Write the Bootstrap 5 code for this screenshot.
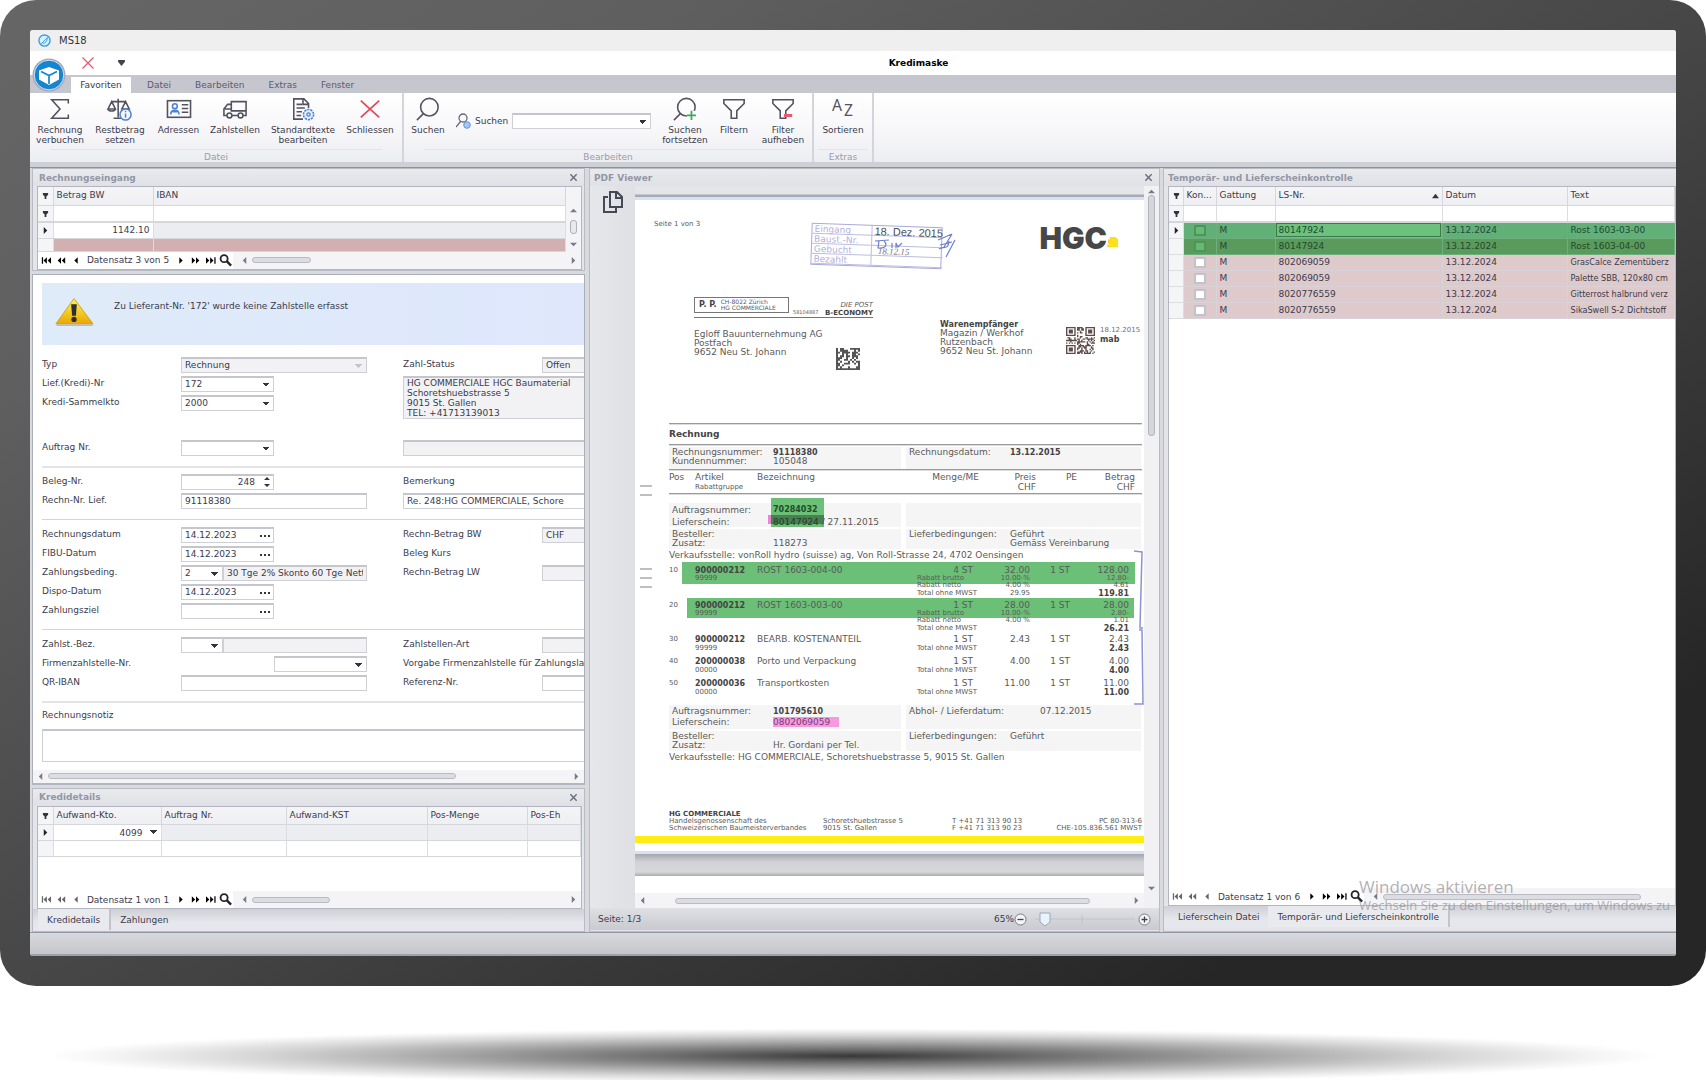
<!DOCTYPE html>
<html lang="de">
<head>
<meta charset="utf-8">
<meta name="viewport" content="width=device-width, initial-scale=1">
<title>MS18 – Kredimaske</title>
<link href="https://cdn.jsdelivr.net/npm/bootstrap@5.3.0/dist/css/bootstrap.min.css" rel="stylesheet">
<style>
:root{--ink:#3b3b4d;--line:#c9cad1;--soft:#f4f4f6;--face:#e4e5e9}
body{background:#fff;font-family:"DejaVu Sans",Tahoma,sans-serif;font-size:9px;line-height:12px;color:var(--ink);overflow-x:hidden}
button,input,select,textarea{font:inherit;color:inherit;border-radius:0}
button{background:none;border:0;padding:0}
.narrow{font-family:"DejaVu Sans Condensed","DejaVu Sans",sans-serif}
.monitor{background:linear-gradient(to bottom right,#666 0%,#5f5f5f 20%,#434343 55%,#262626 85%,#262626 100%);border-radius:36px;padding:30px}
.screen{border-radius:3px;overflow:hidden;background:#d5d6db;position:relative}
.floor{height:60px;margin:40px 30px 0;background:radial-gradient(ellipse 49% 46% at 50% 50%,#383838 0%,#6c6c6c 22%,#a2a2a2 48%,#d6d6d6 74%,#f4f4f4 92%,#fff 100%)}
.titlebar{height:21px;background:#efefef;padding:0 8px;font-size:10px;color:#333}
.quickbar{height:24px;background:#fff}
.quickbar .caption{font-weight:700;font-size:9px;color:#000;padding-left:36px}
.appbtn{position:absolute;left:1px;top:28px;width:36px;height:36px}
.tabstrip{height:18px;background:#c6c6ce;padding-left:41px}
.tabstrip a{height:16px;margin-top:2px;line-height:16px;color:#5b5b6b;text-decoration:none;padding:0 8px}
.tabstrip a.on{background:#fff;color:var(--ink);width:60px;padding:0;text-align:center}
.ribbon{height:69px;background:linear-gradient(#fff,#f6f6f9 60%,#ecedf1)}
.rgroup{border-right:2px solid #d4d5db;height:69px}
.rgroup .acts{height:56px;padding-top:4px}
.rgroup .gname{height:13px;line-height:14px;text-align:center;color:#9a9ca8;border-top:1px solid #e3e4e9;margin:0 20px}
.rbtn{width:60px;line-height:10px;text-align:center;display:flex;flex-direction:column;align-items:center;white-space:nowrap}
.rbtn svg{width:28px;height:24px;margin-bottom:4px}
.rband{height:6px;background:#cfd0d5;border-bottom:1px solid #8c93a0}
.work{height:765px;background:#d9dade;padding:0 0 0 2px;border-bottom:1px solid #8f98a5}
.leftcol{width:553px;gap:3px}
.midcol{width:571px;margin-left:4px}
.rightcol{margin-left:3px;min-width:0}
.pane{background:var(--face);border:1px solid #b9bbc4}
.pane-h{height:17px;padding:0 6px;font-weight:700;color:#9296a5;background:linear-gradient(#e9eaed,#e0e1e6)}
.pane-h svg{width:9px;height:9px}
.gridbox{background:#fff;border:1px solid #b3b6c0;margin:0 2px 0 4px}
table.dgrid{border-collapse:collapse;table-layout:fixed;width:100%;margin:0}
.dgrid th{font-weight:400;background:linear-gradient(#f4f4f6,#eeeff2);border-right:1px solid #d6d7dd;border-bottom:1px solid #d6d7dd;height:18px;padding:0 3px;white-space:nowrap;overflow:hidden;line-height:13px}
.dgrid td{border-right:1px solid #dcdde2;border-bottom:1px solid #d6d7dd;padding:0 3px;height:16px;line-height:14px;white-space:nowrap;overflow:hidden}
.dgrid .frow td{height:17px;border-bottom:2px solid #d6d7dd}
.dgrid .sel{background:#f4f5f7;padding:0 0 0 4px}
.dgrid svg{width:7px;height:7px;display:block}
.nav-strip{height:17px;background:#fff}
.nav-strip button{width:15px;height:15px;line-height:0}
.nav-strip button svg{width:10px;height:7px}
.nav-strip .mag svg{width:13px;height:13px}
.nav-strip .rec{white-space:nowrap;width:90px;text-align:center}
.track{background:#f4f4f7;height:17px}
.thumb{height:6px;border:1px solid #b9bac3;border-radius:3px;background:#dcdde3}
.arr{width:7px;height:7px;flex:none}
.formpane{background:#fff;border:1px solid #a9aeb9;border-bottom:2px solid #b3b6c0;height:511px;overflow:hidden}
.infobox{height:62px;margin:8px 0 12px 9px;background:linear-gradient(90deg,#deebf8,#dfe7fc)}
.fgrid{display:grid;grid-template-columns:139px 42px 51px 93px 36px 139px 160px;grid-auto-rows:16px;row-gap:3px;margin-left:9px}
.fgrid label,.fgrid .lbl{grid-column:1;line-height:14px;white-space:nowrap}
.fgrid .c2{grid-column:6}
.fld{border:1px solid #cfd0d6;border-top:2px solid #c4c5cd;background-color:#fff;padding:0 3px;height:16px;width:100%;min-width:0;outline:0;line-height:12px;display:block}
.fld.ro{background-color:#f2f2f5}
select.fld,.caretbg{appearance:none;background-image:linear-gradient(45deg,transparent 50%,#34343f 50%),linear-gradient(135deg,#34343f 50%,transparent 50%);background-size:4px 4px;background-repeat:no-repeat;background-position:right 7px top 5px,right 3px top 5px}
select.fld.ro{background-image:linear-gradient(45deg,transparent 50%,#c4c5cc 50%),linear-gradient(135deg,#c4c5cc 50%,transparent 50%);opacity:1}
.w1{grid-column:2/4}.w2{grid-column:2/5}.wr{grid-column:7}.wr2{grid-column:6/8}
.datef{position:relative}
.datef button{position:absolute;right:3px;top:2px;line-height:0}
.rule2{height:2px;background:#e4e4e6;margin:10px 0 6px 9px}
.rule1{height:1px;background:#d3d4d8;margin:10px 0 7px 9px}
.btabs{height:22px;background:linear-gradient(#cfd0d6,#e6e7ec 60%);padding-left:5px}
.btabs a{color:var(--ink);text-decoration:none;height:21px;line-height:22px;padding:0 9px}
.btabs a.on{background:#e9eaee;border-right:2px solid #c3c4cb}
.statusrow{height:23px;background:linear-gradient(#d8d9dd,#c5c6cc);border-bottom:2px solid #9fa1a8}
/* PDF viewer */
.sidecol{width:45px;background:linear-gradient(90deg,#e6e7ea,#dfe0e4)}
.paperwrap{width:509px;overflow:hidden;height:707px}
.pdf-top{height:11px;background:linear-gradient(#e4e5e9,#e4e5e9 8px,#a8abb4 9px)}
.paper{position:relative;height:657px;background:#fff;border-top:3px solid #d5e2f5;color:#5a5a5a;font-size:9px;line-height:9px;display:flex;flex-direction:column}
.paper b{color:#444;font-size:8px}
.paper .over{position:absolute;left:0;top:0;pointer-events:none}
.stamp{width:131px;height:42px;transform:rotate(2deg);border:1px solid #a9a9da;color:#b3b2da;display:grid;grid-template-columns:60px 1fr;grid-auto-rows:10px;line-height:10px}
.stamp>*{border-bottom:1px solid #bcbce2;padding-left:2px;white-space:nowrap}
.stamp>:nth-child(odd){border-right:1px solid #bcbce2}
.stamp .dt{font-family:"Liberation Sans",sans-serif;color:#4d4d55;font-size:11px}
.hand{font-family:"Liberation Serif",serif;font-style:italic}
.logo{font-family:Inter,sans-serif;font-weight:900;font-size:30px;line-height:28px;color:#474747}
.pbox{border:1px solid #777;width:95px;height:16px;font-size:6px;line-height:6px;white-space:nowrap}
.doc{margin:0 2px 0 34px}
.dl{height:1px;background:#999;box-shadow:0 1px 0 #ddd}
.duo{display:grid;grid-template-columns:232px 235px;column-gap:5px}
.duo>div{background:#f5f5f5;padding:1px 3px;display:grid;align-content:start;white-space:nowrap;position:relative;grid-template-columns:101px 1fr}
.hl{position:absolute;left:102px;top:-5px;width:53px;height:29px;background:#6bbf76}
.hl::after{content:"";position:absolute;left:-3px;right:0;top:17px;height:9px;background:linear-gradient(90deg,#e887d0 3px,#4a7f52 3px)}
.pos{display:grid;grid-template-columns:26px 62px 160px 62px 57px 54px 45px;white-space:nowrap;position:relative}
.pos>.n{text-align:right}
.pb>.n{padding-right:6px}
.pb>.q{text-align:right;padding-right:20px}
.pos .s,.pos.s{font-size:7px}
.mk{background:#6bbf76;position:absolute}
.yellowbar{height:7px;background:#ffec12;margin-bottom:8px}
.pageend{height:3px;background:#d5e2f5}
.zoomrow{height:22px;background:linear-gradient(#dfe0e4,#c9cacf)}
.ck{appearance:none;width:12px;height:11px;border:2px solid #bfc3cc;background:#fff;margin:0 0 0 7px;display:block}
.g1 td{background:#60b077;color:#1f4a34}.g1 td.cur{background:#6cc27a;outline:1px solid #3a7a4b;outline-offset:-2px}
.g2 td{background:#5b9a5d;color:#1f4a2a}
.g1 td,.g2 td{border-color:#6bb07c}
.g1 .ck,.g2 .ck{background:#66bb74;border-color:#4f9459}
.pk td{background:#decaca;border-color:#d8d3da}
.g1 td.sel,.g2 td.sel,.pk td.sel{background:#f4f5f7;border-color:#dcdde2}
.watermark{position:absolute;left:1329px;top:847px;color:rgba(150,150,155,.75);font-family:"Open Sans",sans-serif;white-space:nowrap}
</style>
</head>
<body>
<svg width="0" height="0" class="position-absolute" aria-hidden="true">
<defs>
<symbol id="x" viewBox="0 0 10 10"><path d="M1.500 1.500l7 7M8.500 1.500l-7 7" stroke="#6a6f7b" stroke-width="1.600"/></symbol>
<symbol id="flt" viewBox="0 0 8 8"><path d="M1 1h6v2L5 5v3H3V5L1 3z" fill="#34343f"/></symbol>
<symbol id="cur" viewBox="0 0 8 8"><path d="M2 0l4 4-4 4z" fill="#23232c"/></symbol>
<symbol id="first" viewBox="0 0 12 8"><path d="M1 0h1.500v8H1zM7 0v8L3 4zM12 0v8L8 4z"/></symbol>
<symbol id="pp" viewBox="0 0 12 8"><path d="M6 0v8L2 4zM11 0v8L7 4z"/></symbol>
<symbol id="pr" viewBox="0 0 12 8"><path d="M8 0v8L4 4z"/></symbol>
<symbol id="nx" viewBox="0 0 12 8"><path d="M4 0v8l4-4z"/></symbol>
<symbol id="np" viewBox="0 0 12 8"><path d="M1 0v8l4-4zM6 0v8l4-4z"/></symbol>
<symbol id="last" viewBox="0 0 12 8"><path d="M0 0v8l4-4zM5 0v8l4-4zM10 0h1.500v8H10z"/></symbol>
<symbol id="mag" viewBox="0 0 14 14"><circle cx="5.500" cy="5" r="3.800" fill="none" stroke="#23232c" stroke-width="2"/><path d="M8.500 8l4.500 4.500" stroke="#23232c" stroke-width="2.600"/></symbol>
<symbol id="al" viewBox="0 0 8 8"><path d="M6 0v8L2 4z" fill="#777b87"/></symbol>
<symbol id="ar" viewBox="0 0 8 8"><path d="M2 0v8l4-4z" fill="#777b87"/></symbol>
<symbol id="au" viewBox="0 0 8 8"><path d="M0 6h8L4 2z" fill="#777b87"/></symbol>
<symbol id="sortup" viewBox="0 0 8 8"><path d="M0 7h8L4 2z" fill="#34343f"/></symbol>
<symbol id="ad" viewBox="0 0 8 8"><path d="M0 2h8L4 6z" fill="#777b87"/></symbol>
<symbol id="dots" viewBox="0 0 12 12"><path d="M1 6h2v2H1zM5 6h2v2H5zM9 6h2v2H9z" fill="#34343f"/></symbol>
<symbol id="lens" viewBox="0 0 28 26"><g fill="none" stroke="#53535f" stroke-width="1.700"><circle cx="15.500" cy="11" r="9.500"/><path d="M9 18L2 25"/></g></symbol>
<symbol id="funnel" viewBox="0 0 28 26"><path d="M3 3h22v4l-8 8v8h-6v-8L3 7z" fill="none" stroke="#53535f" stroke-width="1.700"/></symbol>
</defs></svg>

<main class="monitor">
<div class="screen">
  <header class="titlebar d-flex align-items-center gap-2">
    <svg width="13" height="13" viewBox="0 0 14 14"><circle cx="7" cy="7" r="6" fill="#d9effb" stroke="#39a0dd" stroke-width="1.500"/><path d="M3.500 10.500L10.500 3.500M5 10c3 0 5-2 5-6" stroke="#39a0dd" fill="none"/></svg>
    <span>MS18</span>
  </header>
  <div class="quickbar d-flex align-items-center">
    <button aria-label="Schliessen" class="ms-5 lh-1 ps-1"><svg width="12" height="12" viewBox="0 0 12 12"><path d="M.5 .5l11 11M11.500.5l-11 11" stroke="#e9596c" stroke-width="1.300"/></svg></button>
    <button aria-label="Anpassen" class="ms-4 lh-1"><svg width="7" height="6" viewBox="0 0 8 7"><path d="M0 0h8v2L4 7 0 2z" fill="#44444f"/></svg></button>
    <span class="caption mx-auto">Kredimaske</span>
  </div>
  <button class="appbtn" aria-label="Anwendungsmenü"><svg width="36" height="36" viewBox="0 0 36 36"><circle cx="18" cy="17" r="16.500" fill="#a4a9bd"/><circle cx="18" cy="17" r="14.800" fill="#1585cf" stroke="#cfe0f0" stroke-width="1"/><path d="M8 12.500L18 9l10 3.500v9L18 27 8 21.500z" fill="#fff"/><path d="M10 13.500l8 4 8-4M18 17.500V26" stroke="#1585cf" stroke-width="1.700" fill="none"/></svg></button>
  <nav class="tabstrip d-flex">
    <a href="#" class="on">Favoriten</a>
    <a href="#" class="ms-2">Datei</a>
    <a href="#" class="ms-2">Bearbeiten</a>
    <a href="#" class="ms-2">Extras</a>
    <a href="#" class="ms-2">Fenster</a>
  </nav>
  <div class="ribbon d-flex">
    <section class="rgroup" style="width:374px">
      <div class="acts d-flex align-items-start">
        <button class="rbtn"><svg viewBox="0 0 28 26"><path d="M23 7V3H5l9 10-9 10h18v-4" fill="none" stroke="#53535f" stroke-width="1.700"/></svg>Rechnung<br>verbuchen</button>
        <button class="rbtn"><svg viewBox="0 0 28 26"><g fill="none" stroke="#53535f" stroke-width="1.700"><path d="M12 2v20M7 23h8M5 5h15M5 5l-4 8h8zM20 5l-4 8h8zM1 13c1 3 7 3 8 0"/></g><circle cx="20" cy="19" r="6" fill="#f4f7fd" stroke="#4d82d6" stroke-width="1.600"/><path d="M20 18v4.500M20 15v1.600" stroke="#4d82d6" stroke-width="1.600"/></svg>Restbetrag<br>setzen</button>
        <button class="rbtn" style="width:57px"><svg viewBox="0 0 28 26"><rect x="1.500" y="4" width="25" height="18" fill="none" stroke="#53535f" stroke-width="1.700"/><circle cx="9.500" cy="10" r="2.600" fill="none" stroke="#4d82d6" stroke-width="1.700"/><path d="M5 19c0-6 9-6 9 0M7 16h5" stroke="#4d82d6" fill="none" stroke-width="1.700"/><path d="M17 8.500h7M17 12.500h7M17 16.500h7" stroke="#53535f" stroke-width="1.600"/></svg>Adressen</button>
        <button class="rbtn" style="width:56px"><svg viewBox="0 0 28 26"><g fill="none" stroke="#53535f" stroke-width="1.700"><path d="M10 5h16v15H2v-7l4-5h4zM10 5v10h16M3 13h7"/><circle cx="8" cy="20" r="2.600" fill="#fff"/><circle cx="20" cy="20" r="2.600" fill="#fff"/></g></svg>Zahlstellen</button>
        <button class="rbtn" style="width:80px"><svg viewBox="0 0 28 26"><path d="M20 12V7l-5-5H4v22h10M7 8h6M7 12h9M7 16h6M7 20h5M14 2v6h6" fill="none" stroke="#53535f" stroke-width="1.700"/><circle cx="20" cy="19" r="5.500" fill="#e9f0fc" stroke="#4d82d6" stroke-width="1.800" stroke-dasharray="2.400 1"/><circle cx="20" cy="19" r="1.800" fill="none" stroke="#4d82d6" stroke-width="1.400"/></svg>Standardtexte<br>bearbeiten</button>
        <button class="rbtn" style="width:54px"><svg viewBox="0 0 28 26"><path d="M4 4l20 18M24 4L4 22" stroke="#e2485c" stroke-width="1.900"/></svg>Schliessen</button>
      </div>
      <div class="gname">Datei</div>
    </section>
    <section class="rgroup" style="width:410px">
      <div class="acts d-flex align-items-start">
        <button class="rbtn" style="width:48px"><svg><use href="#lens"/></svg>Suchen</button>
        <div class="d-flex align-items-center pt-3 ps-1 flex-grow-1">
          <svg width="15" height="16" viewBox="0 0 15 16"><circle cx="7" cy="5" r="4" fill="none" stroke="#666a76" stroke-width="1.300"/><path d="M5 8L0 14M9 9l2 2" stroke="#666a76" stroke-width="1.300"/><circle cx="11" cy="12" r="3.300" fill="#a9c6f0" stroke="#5f93dc"/></svg>
          <label for="q" class="ms-1 me-1">Suchen</label>
          <select id="q" class="fld" style="width:139px"><option></option></select>
        </div>
        <button class="rbtn" style="width:50px"><svg viewBox="0 0 28 26"><use href="#lens"/><rect x="16" y="15" width="12" height="11" fill="#fbfbfc"/><path d="M21 15v10M16 20h10" stroke="#3bab52" stroke-width="1.900"/></svg>Suchen<br>fortsetzen</button>
        <button class="rbtn" style="width:48px"><svg><use href="#funnel"/></svg>Filtern</button>
        <button class="rbtn me-1" style="width:50px"><svg viewBox="0 0 28 26"><use href="#funnel"/><path d="M15 20h9" stroke="#e9596c" stroke-width="3.400"/></svg>Filter<br>aufheben</button>
      </div>
      <div class="gname">Bearbeiten</div>
    </section>
    <section class="rgroup" style="width:60px">
      <div class="acts"><button class="rbtn mx-auto" style="width:50px"><svg viewBox="0 0 28 26" font-family="Noto Sans, sans-serif" font-size="17" fill="#53535f"><text x="2" y="15">A</text><text x="15" y="21">Z</text></svg>Sortieren</button></div>
      <div class="gname mx-1">Extras</div>
    </section>
  </div>
  <div class="rband"></div>

  <div class="work d-flex">
    <div class="leftcol d-flex flex-column flex-shrink-0">
      <section class="pane" style="height:103px">
        <div class="pane-h d-flex align-items-center justify-content-between"><span>Rechnungseingang</span><button aria-label="Panel schliessen" class="lh-1"><svg><use href="#x"/></svg></button></div>
        <div class="gridbox">
          <div class="d-flex">
            <table class="dgrid">
              <colgroup><col style="width:15px"><col style="width:100px"><col></colgroup>
              <thead><tr><th class="sel"><svg><use href="#flt"/></svg></th><th>Betrag BW</th><th>IBAN</th></tr></thead>
              <tbody>
                <tr class="frow"><td class="sel"><svg><use href="#flt"/></svg></td><td></td><td></td></tr>
                <tr><td class="sel"><svg><use href="#cur"/></svg></td><td class="text-end">1142.10</td><td style="background:#ecedf0"></td></tr>
                <tr><td class="sel" style="height:13px"></td><td style="background:#d2b0b2;height:13px"></td><td style="background:#d2b0b2;height:13px"></td></tr>
              </tbody>
            </table>
            <div class="d-flex flex-column align-items-center justify-content-between flex-shrink-0 pb-1" style="width:15px;background:#f4f4f7;padding-top:20px">
              <svg class="arr"><use href="#au"/></svg><div style="width:7px;height:14px;border:1px solid #aeb0ba;border-radius:3px;background:#e8e9ee"></div><svg class="arr"><use href="#ad"/></svg>
            </div>
          </div>
          <div class="nav-strip d-flex align-items-center">
            <button aria-label="Erster"><svg><use href="#first"/></svg></button><button aria-label="Seite zurück"><svg><use href="#pp"/></svg></button><button aria-label="Zurück"><svg><use href="#pr"/></svg></button>
            <span class="rec">Datensatz 3 von 5</span>
            <button aria-label="Weiter"><svg><use href="#nx"/></svg></button><button aria-label="Seite vor"><svg><use href="#np"/></svg></button><button aria-label="Letzter"><svg><use href="#last"/></svg></button><button class="mag" aria-label="Suchen"><svg><use href="#mag"/></svg></button>
            <div class="track flex-grow-1 d-flex align-items-center pe-1 ps-2"><svg class="arr me-1"><use href="#al"/></svg><div class="thumb" style="width:59px"></div><svg class="arr ms-auto"><use href="#ar"/></svg></div>
          </div>
        </div>
      </section>

      <form class="formpane">
        <div class="infobox d-flex">
          <svg width="42" height="36" viewBox="0 0 42 38" class="mt-2 flex-shrink-0" style="margin-left:11px"><defs><linearGradient id="wg" x1="0" y1="0" x2="0" y2="1"><stop offset="0" stop-color="#fff35a"/><stop offset="1" stop-color="#eaa800"/></linearGradient></defs><path d="M2 35h40l-2 2H3z" fill="#b9bcc4"/><path d="M21 8L41 34.500H2z" fill="url(#wg)" stroke="#d6a011" stroke-linejoin="round"/><path d="M18 14h6l-1 12h-4z" fill="#2c3036"/><circle cx="21" cy="30" r="2.800" fill="#2c3036"/></svg>
          <div style="padding:17px 0 0 19px" class="text-nowrap">Zu Lieferant-Nr. '172' wurde keine Zahlstelle erfasst</div>
        </div>
        <div class="fgrid" style="grid-template-rows:16px 16px 16px 23px 16px">
          <label for="f1">Typ</label><select id="f1" class="fld ro w2" disabled><option>Rechnung</option></select>
          <label class="c2" for="f2">Zahl-Status</label><input id="f2" class="fld ro wr" value="Offen" readonly>
          <label for="f3">Lief.(Kredi)-Nr</label><select id="f3" class="fld w1"><option>172</option></select>
          <textarea aria-label="Adresse" readonly class="fld ro" style="grid-column:6/8;grid-row:2/5;height:43px;line-height:10px;resize:none;overflow:hidden">HG COMMERCIALE HGC Baumaterial
Schoretshuebstrasse 5
9015 St. Gallen
TEL: +41713139013</textarea>
          <label for="f4" style="grid-row:3">Kredi-Sammelkto</label><select id="f4" class="fld w1" style="grid-row:3"><option>2000</option></select>
          <label for="f5" style="grid-row:5">Auftrag Nr.</label><select id="f5" class="fld w1" style="grid-row:5"><option></option></select>
          <input aria-label="Auftrag" class="fld ro wr2" style="grid-row:5" readonly>
        </div>
        <div class="rule2"></div>
        <div class="fgrid">
          <label for="g1">Beleg-Nr.</label><div class="datef w1"><input id="g1" class="fld text-end" style="padding-right:18px" value="248"><button type="button" aria-label="Wert ändern"><svg width="8" height="12" viewBox="0 0 8 12"><path d="M1 4h6L4 1zM1 8h6L4 11z" fill="#34343f"/></svg></button></div>
          <label class="c2" for="g2">Bemerkung</label>
          <label for="g3">Rechn-Nr. Lief.</label><input id="g3" class="fld w2" value="91118380">
          <input id="g2" class="fld wr2" value="Re. 248:HG COMMERCIALE, Schore">
        </div>
        <div class="rule1"></div>
        <div class="fgrid">
          <label for="h1">Rechnungsdatum</label><div class="datef w1"><input id="h1" class="fld" value="14.12.2023"><button type="button" aria-label="Datum wählen"><svg width="12" height="12"><use href="#dots"/></svg></button></div>
          <label class="c2" for="h2">Rechn-Betrag BW</label><input id="h2" class="fld ro wr" value="CHF" readonly>
          <label for="h3">FIBU-Datum</label><div class="datef w1"><input id="h3" class="fld" value="14.12.2023"><button type="button" aria-label="Datum wählen"><svg width="12" height="12"><use href="#dots"/></svg></button></div>
          <span class="lbl c2">Beleg Kurs</span>
          <label for="h4">Zahlungsbeding.</label><select id="h4" class="fld" style="grid-column:2"><option>2</option></select><input aria-label="Bedingung" class="fld ro" style="grid-column:3/5" value="30 Tge 2% Skonto 60 Tge Nett" readonly>
          <label class="c2" for="h5">Rechn-Betrag LW</label><input id="h5" class="fld ro wr" readonly>
          <label for="h6">Dispo-Datum</label><div class="datef w1"><input id="h6" class="fld" value="14.12.2023"><button type="button" aria-label="Datum wählen"><svg width="12" height="12"><use href="#dots"/></svg></button></div>
          <label for="h7">Zahlungsziel</label><div class="datef w1"><input id="h7" class="fld"><button type="button" aria-label="Datum wählen"><svg width="12" height="12"><use href="#dots"/></svg></button></div>
        </div>
        <div class="rule1"></div>
        <div class="fgrid">
          <label for="i1">Zahlst.-Bez.</label><select id="i1" class="fld" style="grid-column:2"><option></option></select><input aria-label="Bezeichnung" class="fld ro" style="grid-column:3/5" readonly>
          <label class="c2" for="i2">Zahlstellen-Art</label><input id="i2" class="fld ro wr" readonly>
          <label for="i3">Firmenzahlstelle-Nr.</label><select id="i3" class="fld" style="grid-column:4"><option></option></select>
          <span class="lbl c2">Vorgabe Firmenzahlstelle für Zahlungslauf</span>
          <label for="i4">QR-IBAN</label><input id="i4" class="fld w2">
          <label class="c2" for="i5">Referenz-Nr.</label><input id="i5" class="fld wr">
        </div>
        <div class="rule2"></div>
        <div style="margin-left:9px"><label for="n1" class="d-block mb-2">Rechnungsnotiz</label><textarea id="n1" class="fld" style="height:33px;resize:none;width:700px"></textarea></div>
        <div class="track d-flex align-items-center px-1 mt-2" style="height:13px"><svg class="arr me-1"><use href="#al"/></svg><div class="thumb" style="width:408px"></div><svg class="arr ms-auto"><use href="#ar"/></svg></div>
      </form>

      <section class="pane flex-grow-1">
        <div class="pane-h d-flex align-items-center justify-content-between"><span>Kredidetails</span><button aria-label="Panel schliessen" class="lh-1"><svg><use href="#x"/></svg></button></div>
        <div class="gridbox">
          <table class="dgrid">
            <colgroup><col style="width:15px"><col style="width:108px"><col style="width:125px"><col style="width:141px"><col style="width:100px"><col></colgroup>
            <thead><tr><th class="sel"><svg><use href="#flt"/></svg></th><th>Aufwand-Kto.</th><th>Auftrag Nr.</th><th>Aufwand-KST</th><th>Pos-Menge</th><th>Pos-Eh</th></tr></thead>
            <tbody><tr style="background:#ecedf0"><td class="sel"><svg><use href="#cur"/></svg></td><td class="caretbg bg-white text-end" style="padding-right:18px">4099</td><td></td><td></td><td></td><td></td></tr>
            <tr><td class="sel"></td><td></td><td></td><td></td><td></td><td></td></tr></tbody>
          </table>
          <div style="height:34px"></div>
          <div class="nav-strip d-flex align-items-center">
            <button aria-label="Erster"><svg opacity=".6"><use href="#first"/></svg></button><button aria-label="Seite zurück"><svg opacity=".6"><use href="#pp"/></svg></button><button aria-label="Zurück"><svg opacity=".6"><use href="#pr"/></svg></button>
            <span class="rec">Datensatz 1 von 1</span>
            <button aria-label="Weiter"><svg><use href="#nx"/></svg></button><button aria-label="Seite vor"><svg><use href="#np"/></svg></button><button aria-label="Letzter"><svg><use href="#last"/></svg></button><button class="mag" aria-label="Suchen"><svg><use href="#mag"/></svg></button>
            <div class="track flex-grow-1 d-flex align-items-center pe-1 ps-2"><svg class="arr me-1"><use href="#al"/></svg><div class="thumb" style="width:78px"></div><svg class="arr ms-auto"><use href="#ar"/></svg></div>
          </div>
        </div>
        <nav class="btabs d-flex"><a href="#" class="on">Kredidetails</a><a href="#">Zahlungen</a></nav>
      </section>
    </div>

    <section class="pane midcol flex-shrink-0">
      <div class="pane-h d-flex align-items-center justify-content-between ps-1"><span>PDF Viewer</span><button aria-label="Panel schliessen" class="lh-1"><svg><use href="#x"/></svg></button></div>
      <div class="d-flex">
        <div class="sidecol flex-shrink-0 pt-1 ps-2"><button aria-label="Seiten" class="ps-1"><svg width="22" height="24" viewBox="0 0 22 24"><path d="M8 2h7l5 5v10H8z M6 7H2v15h12v-4M14 2v6h6" fill="none" stroke="#454856" stroke-width="2"/></svg></button></div>
        <div class="flex-shrink-0" style="width:509px">
        <div class="paperwrap">
          <div class="pdf-top"></div>
          <article class="paper">
            <div class="d-flex" style="height:60px;padding:20px 25px 0 19px">
              <span style="font-size:7px" class="text-nowrap">Seite 1 von 3</span>
              <div class="stamp flex-shrink-0" style="margin-left:111px;margin-top:5px"><span>Eingang</span><span class="dt">18. Dez. 2015</span><span>Baust.-Nr.</span><span></span><span>Gebucht</span><span class="hand" style="color:#76737c;padding-left:6px">18.12.15</span><span>Bezahlt</span><span></span></div>
              <div class="logo ms-auto d-flex align-items-end" style="height:28px;margin-top:4px">HGC<svg width="12" height="11" viewBox="0 0 14 13" class="mb-1"><path d="M1 3h3v5H1z" fill="#ffc93c"/><path d="M3 0h7l3 3v9H0V9h3z" fill="#fbe01f"/></svg></div>
            </div>
            <div class="d-flex" style="height:163px;padding:40px 5px 0 59px">
              <div style="width:246px" class="flex-shrink-0">
                <div class="d-flex align-items-end border-bottom border-secondary" style="width:179px;height:18px">
                  <div class="pbox d-flex align-items-center gap-1 mb-1 ps-1 flex-shrink-0"><b>P. P.</b><span>CH-8022 Zürich<br>HG COMMERCIALE</span></div>
                  <span style="font-size:5px" class="ps-1">58104887</span>
                  <div class="text-end ms-auto" style="line-height:8px;font-size:7px"><i>DIE POST</i><br><b style="font-size:7px">B-ECONOMY</b></div>
                </div>
                <div class="d-flex" style="padding-top:12px"><div style="width:142px" class="flex-shrink-0">Egloff Bauunternehmung AG<br>Postfach<br>9652 Neu St. Johann</div><svg id="dm" width="24" height="22" viewBox="0 0 12 12" preserveAspectRatio="none" style="margin-top:18px"></svg></div>
              </div>
              <div style="padding-top:20px;width:126px" class="flex-shrink-0"><b>Warenempfänger</b><br>Magazin / Werkhof<br>Rutzenbach<br>9652 Neu St. Johann</div>
              <svg id="qr" width="29" height="27" viewBox="0 0 21 21" preserveAspectRatio="none" class="flex-shrink-0" style="margin-top:27px"></svg>
              <div style="padding:26px 0 0 5px;font-size:7px;color:#7a6a6e">18.12.2015<br><b>mab</b></div>
            </div>
            <div class="doc">
              <div class="dl"></div>
              <div style="height:20px;padding-top:6px"><b style="font-size:9px">Rechnung</b></div>
              <div class="dl"></div>
              <div class="duo" style="height:24px;padding-top:2px"><div><span>Rechnungsnummer:</span><b>91118380</b><span>Kundennummer:</span><span>105048</span></div><div><span>Rechnungsdatum:</span><b>13.12.2015</b></div></div>
              <div class="dl"></div>
              <div class="pos" style="height:23px;padding-top:3px"><span>Pos</span><span>Artikel</span><span>Bezeichnung</span><span class="n">Menge/ME</span><span class="n">Preis</span><span class="n" style="padding-right:13px">PE</span><span class="n">Betrag</span>
                <span></span><span class="s">Rabattgruppe</span><span></span><span></span><span class="n">CHF</span><span></span><span class="n">CHF</span></div>
              <div class="dl"></div>
              <div class="duo" style="margin-top:9px;grid-template-rows:24px;line-height:12px"><div><i class="hl"></i><span>Auftragsnummer:</span><b style="z-index:1;color:#1f4d27">70284032</b><span>Lieferschein:</span><span style="z-index:1"><span style="color:#1f3d24">80147924</span> / 27.11.2015</span></div><div></div></div>
              <div class="duo" style="margin-top:2px;grid-template-rows:20px"><div><span>Besteller:</span><span></span><span>Zusatz:</span><span>118273</span></div><div><span>Lieferbedingungen:</span><span>Geführt</span><span></span><span>Gemäss Vereinbarung</span></div></div>
              <div style="height:13px;padding-top:2px;white-space:nowrap">Verkaufsstelle: vonRoll hydro (suisse) ag, Von Roll-Strasse 24, 4702 Oensingen</div>
              <div style="position:relative;height:36px;padding-top:4px"><div class="mk" style="left:13px;right:7px;top:0;height:22px"></div>
                <div class="pos pb"><span class="s">10</span><b>900000212</b><span>ROST 1603-004-00</span><span class="n">4 ST</span><span class="n">32.00</span><span class="q">1 ST</span><span class="n">128.00</span></div>
                <div class="pos pb s" style="line-height:7px"><span></span><span>99999</span><span></span><span>Rabatt brutto</span><span class="n">10.00-%</span><span></span><span class="n">12.80-</span>
                <span></span><span></span><span></span><span>Rabatt netto</span><span class="n">4.00 %</span><span></span><span class="n">4.61</span></div>
                <div class="pos pb"><span></span><span></span><span></span><span class="s">Total ohne MWST</span><span class="n s">29.95</span><span></span><b class="n">119.81</b></div></div>
              <div style="position:relative;height:34px;padding-top:3px"><div class="mk" style="left:18px;right:8px;top:0;height:20px"></div>
                <div class="pos pb"><span class="s">20</span><b>900000212</b><span>ROST 1603-003-00</span><span class="n">1 ST</span><span class="n">28.00</span><span class="q">1 ST</span><span class="n">28.00</span></div>
                <div class="pos pb s" style="line-height:7px"><span></span><span>99999</span><span></span><span>Rabatt brutto</span><span class="n">10.00-%</span><span></span><span class="n">2.80-</span>
                <span></span><span></span><span></span><span>Rabatt netto</span><span class="n">4.00 %</span><span></span><span class="n">1.01</span></div>
                <div class="pos pb"><span></span><span></span><span></span><span class="s">Total ohne MWST</span><span></span><span></span><b class="n">26.21</b></div></div>
              <div style="height:22px;padding-top:3px">
                <div class="pos pb"><span class="s">30</span><b>900000212</b><span>BEARB. KOSTENANTEIL</span><span class="n">1 ST</span><span class="n">2.43</span><span class="q">1 ST</span><span class="n">2.43</span><span></span><span class="s">99999</span><span></span><span class="s">Total ohne MWST</span><span></span><span></span><b class="n">2.43</b></div></div>
              <div style="height:22px;padding-top:3px">
                <div class="pos pb"><span class="s">40</span><b>200000038</b><span>Porto und Verpackung</span><span class="n">1 ST</span><span class="n">4.00</span><span class="q">1 ST</span><span class="n">4.00</span><span></span><span class="s">00000</span><span></span><span class="s">Total ohne MWST</span><span></span><span></span><b class="n">4.00</b></div></div>
              <div style="height:29px;padding-top:3px">
                <div class="pos pb"><span class="s">50</span><b>200000036</b><span>Transportkosten</span><span class="n">1 ST</span><span class="n">11.00</span><span class="q">1 ST</span><span class="n">11.00</span><span></span><span class="s">00000</span><span></span><span class="s">Total ohne MWST</span><span></span><span></span><b class="n">11.00</b></div></div>
              <div class="duo" style="grid-template-rows:24px;line-height:11px"><div><span>Auftragsnummer:</span><b>101795610</b><span>Lieferschein:</span><span><span style="background:#f49ae0;color:#7b3b75;padding-right:9px">0802069059</span></span></div><div><span>Abhol- / Lieferdatum:</span><span style="padding-left:30px">07.12.2015</span></div></div>
              <div class="duo" style="margin-top:2px;grid-template-rows:20px"><div><span>Besteller:</span><span></span><span>Zusatz:</span><span>Hr. Gordani per Tel.</span></div><div><span>Lieferbedingungen:</span><span>Geführt</span></div></div>
              <div style="padding-top:2px;white-space:nowrap">Verkaufsstelle: HG COMMERCIALE, Schoretshuebstrasse 5, 9015 St. Gallen</div>
            </div>
            <div class="doc mt-auto mb-1 d-flex align-items-end" style="font-size:7px;line-height:7px"><div style="width:154px" class="text-nowrap"><b style="font-size:7px">HG COMMERCIALE</b><br>Handelsgenossenschaft des<br>Schweizerischen Baumeisterverbandes</div><div style="width:129px">Schoretshuebstrasse 5<br>9015 St. Gallen</div><div>T +41 71 313 90 13<br>F +41 71 313 90 23</div><div class="text-end ms-auto">PC 80-313-6<br>CHE-105.836.561 MWST</div></div>
            <div class="yellowbar flex-shrink-0"></div><div class="pageend flex-shrink-0"></div>
            <svg class="over" width="509" height="640" viewBox="0 0 509 640" fill="none"><path d="M5 286h12M5 295h12M5 369h12M5 378h12M5 387h12" stroke="#aaa" stroke-width="1.500"/><path d="M499 351l8 1-2 76h3M504 430h3l1 74h-9" stroke="#8d93cf" stroke-width="1.500"/><path d="M240 41l14-1M244 41l-1 7c9 1 9-4 6-7M257 43v5M261 48v-5l2 4 4-4M303 40l14-6M305 45l12-3M309 47l8-13M304 49c6-4 9 2 10-8M311 57l9-17" stroke="#6f80cf" stroke-width="1.200"/></svg>
          </article>
          <div style="height:22px;background:linear-gradient(#a5a7ad,#d2d3d7 8px,#d6d7db 18px,#a9abb1)"></div>
          <div style="height:30px" class="bg-white"></div>
        </div>
        <div class="track d-flex align-items-center px-1" style="height:15px"><svg class="arr"><use href="#al"/></svg><div class="thumb" style="width:415px;margin-left:29px"></div><svg class="arr ms-auto"><use href="#ar"/></svg></div>
        </div>
        <div class="d-flex flex-column align-items-center flex-grow-1 pb-3" style="background:#f1f1f4;padding-top:2px"><svg class="arr"><use href="#au"/></svg><div style="width:7px;height:241px;border:1px solid #b3b5be;border-radius:3px;background:#d5d6dc"></div><svg class="arr mt-auto"><use href="#ad"/></svg></div>
      </div>
      <div class="zoomrow d-flex align-items-center ps-2 pe-2"><span>Seite: 1/3</span>
        <span class="ms-auto">65%</span>
        <button aria-label="Verkleinern" class="lh-1"><svg width="13" height="13" viewBox="0 0 13 13"><circle cx="6.500" cy="6.500" r="5.500" fill="#f4f4f6" stroke="#777a84"/><path d="M3.500 6.500h6" stroke="#444" stroke-width="1.300"/></svg></button>
        <svg width="111" height="16" viewBox="0 0 111 16"><path d="M8 8h100M55 4v8" stroke="#c1c2c9"/><path d="M13 2h10v9l-5 4-5-4z" fill="#e9f2fd" stroke="#9aa7bd"/></svg>
        <button aria-label="Vergrössern" class="lh-1"><svg width="13" height="13" viewBox="0 0 13 13"><circle cx="6.500" cy="6.500" r="5.500" fill="#f4f4f6" stroke="#777a84"/><path d="M3.500 6.500h6M6.500 3.500v6" stroke="#444" stroke-width="1.300"/></svg></button>
      </div>
    </section>

    <section class="pane rightcol flex-grow-1 overflow-hidden border-end-0">
      <div class="pane-h d-flex align-items-center ps-1"><span>Temporär- und Lieferscheinkontrolle</span></div>
      <div class="gridbox me-0">
        <div style="height:701px">
        <table class="dgrid">
          <colgroup><col style="width:14px"><col style="width:33px"><col style="width:59px"><col style="width:167px"><col style="width:125px"><col></colgroup>
          <thead><tr><th class="sel"><svg><use href="#flt"/></svg></th><th>Kon...</th><th>Gattung</th><th><span class="d-flex justify-content-between align-items-center">LS-Nr. <svg><use href="#sortup"/></svg></span></th><th>Datum</th><th>Text</th></tr></thead>
          <tbody>
            <tr class="frow"><td class="sel"><svg><use href="#flt"/></svg></td><td></td><td></td><td></td><td></td><td></td></tr>
            <tr class="g1"><td class="sel"><svg><use href="#cur"/></svg></td><td><input type="checkbox" class="ck" aria-label="Kontrolliert"></td><td>M</td><td class="cur">80147924</td><td>13.12.2024</td><td>Rost 1603-03-00</td></tr>
            <tr class="g2"><td class="sel"></td><td><input type="checkbox" class="ck" aria-label="Kontrolliert"></td><td>M</td><td>80147924</td><td>13.12.2024</td><td>Rost 1603-04-00</td></tr>
            <tr class="pk"><td class="sel"></td><td><input type="checkbox" class="ck" aria-label="Kontrolliert"></td><td>M</td><td>802069059</td><td>13.12.2024</td><td class="narrow">GrasCalce Zementüberz</td></tr>
            <tr class="pk"><td class="sel"></td><td><input type="checkbox" class="ck" aria-label="Kontrolliert"></td><td>M</td><td>802069059</td><td>13.12.2024</td><td class="narrow">Palette SBB, 120x80 cm</td></tr>
            <tr class="pk"><td class="sel"></td><td><input type="checkbox" class="ck" aria-label="Kontrolliert"></td><td>M</td><td>8020776559</td><td>13.12.2024</td><td class="narrow">Gitterrost halbrund verz</td></tr>
            <tr class="pk"><td class="sel"></td><td><input type="checkbox" class="ck" aria-label="Kontrolliert"></td><td>M</td><td>8020776559</td><td>13.12.2024</td><td class="narrow">SikaSwell S-2 Dichtstoff</td></tr>
          </tbody>
        </table>
        </div>
        <div class="nav-strip d-flex align-items-center">
          <button aria-label="Erster"><svg opacity=".6"><use href="#first"/></svg></button><button aria-label="Seite zurück"><svg opacity=".6"><use href="#pp"/></svg></button><button aria-label="Zurück"><svg opacity=".6"><use href="#pr"/></svg></button>
          <span class="rec">Datensatz 1 von 6</span>
          <button aria-label="Weiter"><svg><use href="#nx"/></svg></button><button aria-label="Seite vor"><svg><use href="#np"/></svg></button><button aria-label="Letzter"><svg><use href="#last"/></svg></button><button class="mag" aria-label="Suchen"><svg><use href="#mag"/></svg></button>
          <div class="track flex-grow-1 d-flex align-items-center pe-1 ps-2"><svg class="arr me-1"><use href="#al"/></svg><div class="thumb" style="width:258px"></div></div>
        </div>
      </div>
      <nav class="btabs d-flex"><a href="#">Lieferschein Datei</a><a href="#" class="on">Temporär- und Lieferscheinkontrolle</a></nav>
    </section>
  </div>
  <footer class="statusrow"></footer>
  <div class="watermark"><div style="font-size:17px;line-height:20px">Windows aktivieren</div><div style="font-size:13px;line-height:16px">Wechseln Sie zu den Einstellungen, um Windows zu</div></div>
</div>
</main>
<div class="floor"></div>
<script src="https://cdn.jsdelivr.net/npm/bootstrap@5.3.0/dist/js/bootstrap.bundle.min.js"></script>
<script>
// Fill the two matrix codes with modules
function matrix(id, n, color, finders){
  let s = 7, d = '';
  const inF = (x, y) => finders && ((x < 8 && y < 8) || (x > n - 9 && y < 8) || (x < 8 && y > n - 9));
  for (let y = 0; y < n; y++) for (let x = 0; x < n; x++){
    s = (s * 1103515245 + 12345) % 2147483648;
    if (!inF(x, y) && (s >> 16) % 2) d += `M${x} ${y}h1v1h-1z`;
  }
  if (finders) for (const [a, b] of [[0,0],[n-7,0],[0,n-7]])
    d += `M${a} ${b}h7v7h-7zM${a+1} ${b+1}v5h5v-5zM${a+2} ${b+2}h3v3h-3z`;
  else d += `M0 0h1v${n}h-1zM0 ${n-1}h${n}v1h-${n}z`;
  document.getElementById(id).innerHTML = `<path d="${d}" fill="${color}"/>`;
}
matrix('dm', 12, '#555', false);
matrix('qr', 21, '#5f4a4a', true);
</script>
</body>
</html>
